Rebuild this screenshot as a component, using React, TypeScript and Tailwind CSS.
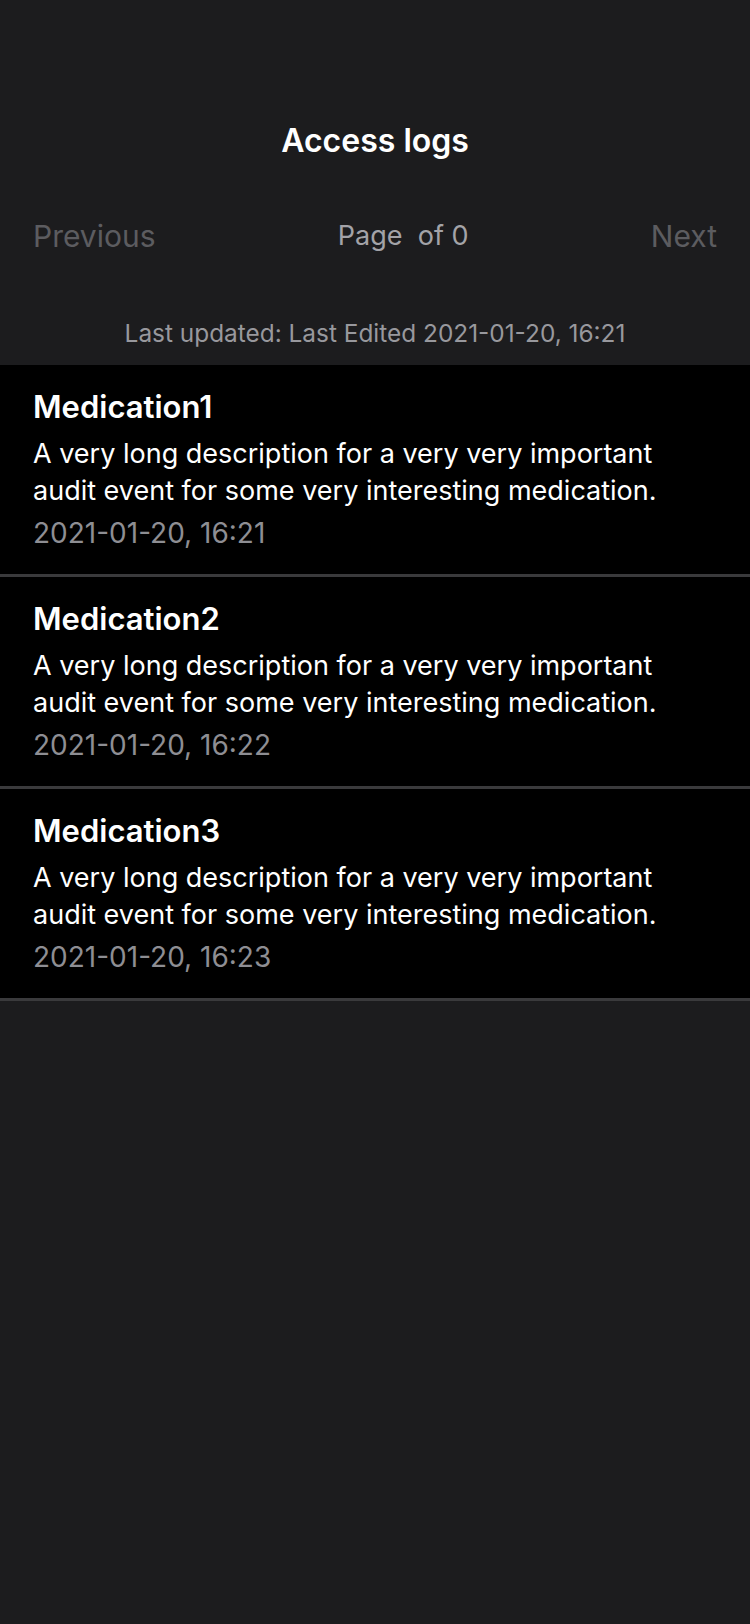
const entries = [
  { name: 'Medication1', time: '2021-01-20, 16:21' },
  { name: 'Medication2', time: '2021-01-20, 16:22' },
  { name: 'Medication3', time: '2021-01-20, 16:23' },
];

const description =
  'A very long description for a very very important audit event for some very interesting medication.';

function LogRow({ name, time }: { name: string; time: string }) {
  return (
    <div className="border-b-[3px] border-[#3a3a3c] bg-black px-[33px] pt-[24px] pb-[23px]">
      <div className="h-[36px] text-[31px] leading-[36px] font-semibold text-white">{name}</div>
      <p className="mt-[10px] pr-[40px] text-[27px] leading-[37px] text-white">{description}</p>
      <div className="mt-[6px] h-[36px] text-[28px] leading-[36px] text-[#8e8e93]">{time}</div>
    </div>
  );
}

export default function App() {
  return (
    <div
      className="min-h-[1624px] w-full bg-[#1c1c1e]"
      style={{ fontFamily: 'Inter, "Noto Sans", sans-serif' }}
    >
      <header className="flex h-[365px] flex-col">
        <h1 className="mt-[121px] h-[40px] text-center text-[32px] leading-[40px] font-semibold text-white">
          Access logs
        </h1>
        <div className="mt-[55px] flex h-[40px] items-center justify-between px-[33px] leading-[40px]">
          <button className="text-[30px] text-[#5c5c60]">Previous</button>
          <span className="text-[27px] text-[#a3a3a8]">Page &nbsp;of 0</span>
          <button className="text-[30px] text-[#5c5c60]">Next</button>
        </div>
        <p className="mt-[62px] h-[30px] text-center text-[24.4px] leading-[30px] text-[#98989d]">
          Last updated: Last Edited 2021-01-20, 16:21
        </p>
      </header>
      <div>
        {entries.map((e) => (
          <LogRow key={e.name} name={e.name} time={e.time} />
        ))}
      </div>
    </div>
  );
}
